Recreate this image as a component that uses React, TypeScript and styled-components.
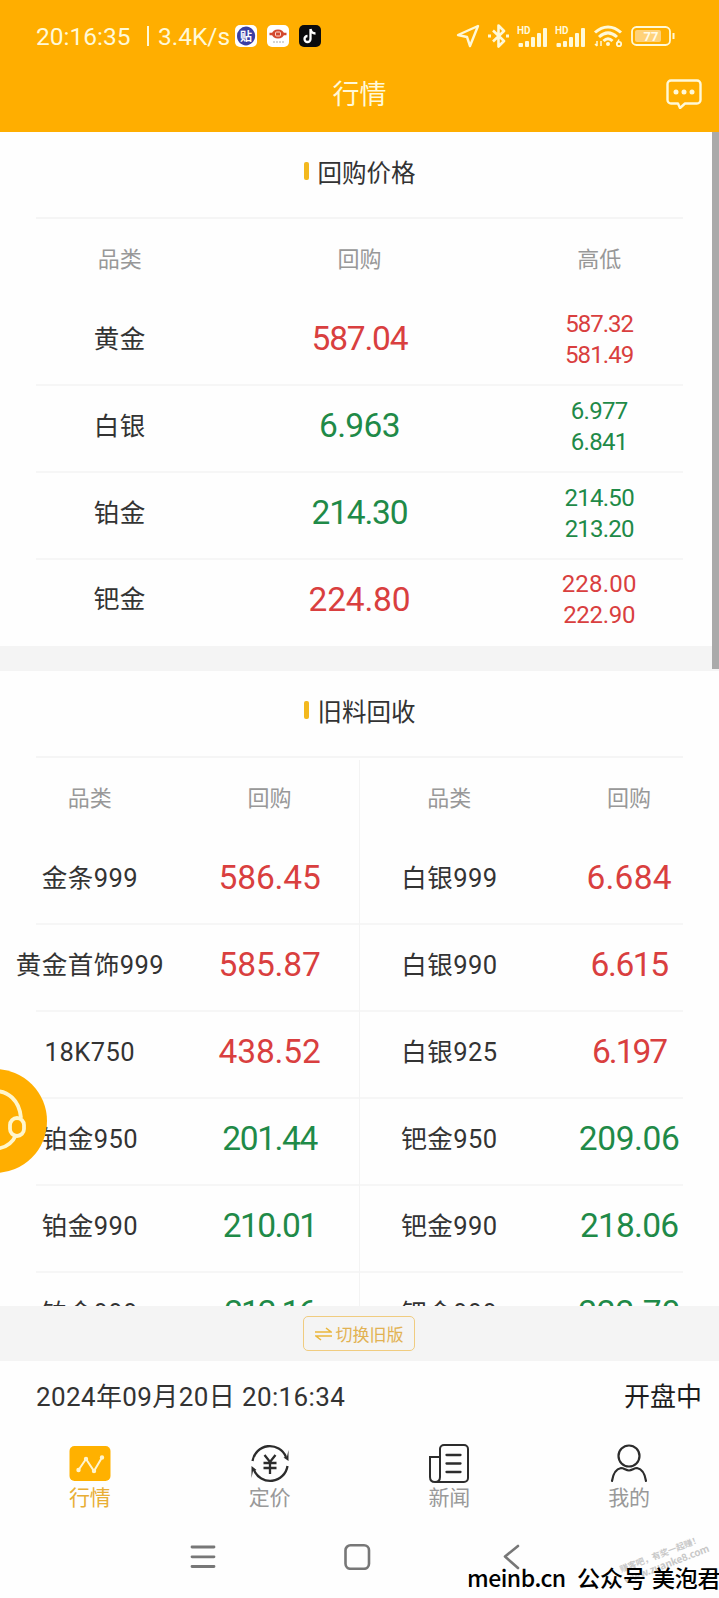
import React from 'react';
import styled, { createGlobalStyle } from 'styled-components';

const Global = createGlobalStyle`
  * { box-sizing: border-box; }
  body { margin: 0; background: #fefefe; font-family: Roboto, "Noto Sans CJK SC", sans-serif; color: #333; }
`;

const RED = '#d93f3f';
const GREEN = '#1f8a48';
const AMBER = '#ffae00';

const Page = styled.div`
  position: relative;
  width: 719px;
  height: 1598px;
  overflow: hidden;
  display: flex;
  flex-direction: column;
`;

const Header = styled.header`
  height: 132px;
  flex: none;
  background: ${AMBER};
  color: #fff9d8;
`;

const StatusBar = styled.div`
  display: flex;
  align-items: center;
  justify-content: space-between;
  height: 72px;
  padding: 0 44px 0 36px;
`;

const StatusGroup = styled.div<{ $gap: number }>`
  display: flex;
  align-items: center;
  gap: ${(p) => p.$gap}px;
`;

const StatusText = styled.span<{ $w: number; $ls?: number }>`
  width: ${(p) => p.$w}px;
  padding-top: 1px;
  font-size: 24.5px;
  line-height: 36px;
  white-space: nowrap;
  letter-spacing: ${(p) => p.$ls ?? 0}px;
`;

const Divider = styled.span`
  width: 2px;
  height: 20px;
  margin-right: 9px;
  background: #fff9d8;
`;

const AppBadges = styled.div`
  display: flex;
  gap: 10px;
  margin-left: 4px;
`;

const TitleBar = styled.div`
  display: grid;
  grid-template-columns: 1fr auto 1fr;
  align-items: center;
  height: 44px;
  padding-right: 17px;
`;

const Title = styled.h1`
  grid-column: 2;
  margin: 0;
  padding: 1px 0 0 17px;
  font-size: 27px;
  line-height: 40px;
  font-weight: 400;
`;

const TitleAction = styled.div`
  justify-self: end;
  height: 30px;
`;

const Scroller = styled.main`
  flex: none;
  height: 1174px;
  overflow: hidden;
`;

const Section = styled.section<{ $gap?: boolean }>`
  ${(p) => (p.$gap ? 'border-bottom: 25px solid #f4f4f4;' : '')}
`;

const SectionTitle = styled.h2`
  display: flex;
  align-items: center;
  justify-content: center;
  gap: 9px;
  height: 87px;
  margin: 0 36px;
  padding-bottom: 7px;
  border-bottom: 2px solid #f5f5f5;
  font-size: 24.5px;
  font-weight: 400;
  &::before {
    content: '';
    width: 5px;
    height: 18px;
    border-radius: 2px;
    background: #f3b81e;
  }
`;

const Row = styled.div<{ $cols: number; $last?: boolean; $h?: number }>`
  position: relative;
  display: grid;
  grid-template-columns: repeat(${(p) => p.$cols}, 1fr);
  height: ${(p) => p.$h ?? 87}px;
  align-items: center;
  justify-items: center;
  white-space: nowrap;
  &::after {
    content: '';
    position: absolute;
    left: 36px;
    right: 36px;
    bottom: 0;
    height: ${(p) => (p.$last ? 0 : 2)}px;
    background: #f6f6f6;
  }
`;

const HeadCell = styled.div`
  padding-top: 2px;
  font-size: 22px;
  line-height: 32px;
  color: #989898;
`;

const Name = styled.div`
  padding-bottom: 8px;
  font-size: 25.5px;
  line-height: 38px;
  letter-spacing: 0.5px;
`;

const Price = styled.div<{ $color: string; $ls: number }>`
  padding-bottom: 7px;
  font-size: 33.5px;
  line-height: 44px;
  letter-spacing: ${(p) => p.$ls}px;
  color: ${(p) => p.$color};
`;

const Range = styled.div<{ $color: string }>`
  padding-bottom: 6px;
  font-size: 24px;
  line-height: 31px;
  text-align: center;
  color: ${(p) => p.$color};
`;

const RangeValue = styled.div<{ $ls: number }>`
  letter-spacing: ${(p) => p.$ls}px;
`;

const SplitBody = styled.div`
  position: relative;
`;

const Splits = styled.div`
  position: absolute;
  left: 359px;
  top: 2px;
  width: 1px;
  height: 100%;
  background: #f3f3f3;
`;

const SwitchStrip = styled.div`
  flex: none;
  display: flex;
  justify-content: center;
  align-items: flex-start;
  height: 55px;
  padding: 10px 1px 0 0;
  background: #f4f4f4;
`;

const SwitchButton = styled.button`
  display: flex;
  align-items: center;
  justify-content: center;
  gap: 4px;
  width: 112px;
  height: 35px;
  padding: 0;
  border: 1.5px solid #f0cc80;
  border-radius: 5px;
  background: transparent;
  color: #e2b253;
  font: 17px/24px "Noto Sans CJK SC", sans-serif;
`;

const TimeBar = styled.div`
  flex: none;
  display: flex;
  justify-content: space-between;
  align-items: center;
  height: 72px;
  padding: 0 17px 0 36px;
  font-size: 26px;
  line-height: 38px;
`;

const Clock = styled.span`
  letter-spacing: 0.38px;
`;

const State = styled.span`
  color: #1c1c1c;
`;

const Tabs = styled.nav`
  flex: none;
  display: grid;
  grid-template-columns: repeat(4, 1fr);
  height: 91px;
`;

const Tab = styled.a<{ $active?: boolean }>`
  display: flex;
  flex-direction: column;
  align-items: center;
  padding-top: 11px;
  font-size: 21px;
  line-height: 31px;
  color: ${(p) => (p.$active ? '#e8ae35' : '#999')};
  svg { flex: none; display: block; }
`;

const SystemNav = styled.div`
  flex: 1;
  display: flex;
  padding: 20px 0 0 188px;
  gap: 125px;
`;

const ScrollThumb = styled.div`
  position: absolute;
  top: 132px;
  right: 0;
  width: 7px;
  height: 537px;
  background: #aaa;
`;

const Support = styled.div`
  position: absolute;
  left: -57px;
  top: 1069px;
  width: 104px;
  height: 104px;
  border-radius: 50%;
  background: ${AMBER};
`;

const Credit = styled.div`
  position: absolute;
  left: 467px;
  top: 1560px;
  display: flex;
  white-space: nowrap;
  font: 500 23px/34px "Noto Sans CJK SC", sans-serif;
  color: #000;
`;

const CreditPart = styled.span<{ $w: number; $ls?: number }>`
  width: ${(p) => p.$w}px;
  letter-spacing: ${(p) => p.$ls ?? 0}px;
`;

const Stamp = styled.div`
  position: absolute;
  left: 619px;
  top: 1547px;
  width: 86px;
  transform: rotate(-21deg);
  font: 700 8.6px/12px "Noto Sans CJK SC", sans-serif;
  color: #c8c8c8;
  white-space: nowrap;
`;

const StampSite = styled.div`
  font-size: 10px;
  letter-spacing: -0.2px;
`;

/* A price and the tracking it is set with. */
type Figure = [string, number];

const metals: { name: string; price: Figure; high: Figure; low: Figure; up: boolean }[] = [
  { name: '黄金', price: ['587.04', -1.2], high: ['587.32', -1], low: ['581.49', -0.9], up: true },
  { name: '白银', price: ['6.963', -0.6], high: ['6.977', -0.7], low: ['6.841', -0.7], up: false },
  { name: '铂金', price: ['214.30', -1.2], high: ['214.50', -0.7], low: ['213.20', -0.8], up: false },
  { name: '钯金', price: ['224.80', -0.2], high: ['228.00', 0.2], low: ['222.90', -0.3], up: true },
];

const scrap: [string, Figure, string, Figure, boolean][] = [
  ['金条999', ['586.45', -0.1], '白银999', ['6.684', 0.2], true],
  ['黄金首饰999', ['585.87', -0.1], '白银990', ['6.615', -1.4], true],
  ['18K750', ['438.52', -0.1], '白银925', ['6.197', -2], true],
  ['铂金950', ['201.44', -1.4], '钯金950', ['209.06', -0.4], false],
  ['铂金990', ['210.01', -1.5], '钯金990', ['218.06', -0.8], false],
  ['铂金999', ['212.16', -2], '钯金999', ['222.70', -0.2], false],
];

const Signal = () => (
  <svg width="31" height="23" viewBox="0 0 31 23" fill="#fff9d8">
    <text x="0" y="9" fontSize="10" fontWeight="700" fontFamily="Roboto">HD</text>
    <rect x="1.500" y="18" width="4.500" height="4" rx="1" />
    <rect x="8" y="16" width="4" height="6" rx="1" />
    <rect x="14" y="12" width="4" height="10" rx="1" />
    <rect x="20" y="8" width="4" height="14" rx="1" />
    <rect x="26" y="3" width="4" height="19" rx="1" />
  </svg>
);

export default function App() {
  return (
    <Page>
      <Global />
      <Header>
        <StatusBar>
          <StatusGroup $gap={0}>
            <StatusText $w={111} $ls={0}>20:16:35</StatusText>
            <Divider />
            <StatusText $w={73} $ls={0}>3.4K/s</StatusText>
            <AppBadges>
              <svg width="22" height="22" viewBox="0 0 22 22">
                <rect width="22" height="22" rx="5" fill="#fff" />
                <path d="M11 1.500a9.500 9.500 0 0 1 9 11c-.7 4-4 7.500-9 8-5-.5-9-4-9-9.500a9.500 9.500 0 0 1 9-9.500z" fill="#3b3fa4" />
                <text x="11" y="15.500" textAnchor="middle" fontSize="12" fontWeight="700" fontFamily="Noto Sans CJK SC" fill="#fff">贴</text>
              </svg>
              <svg width="22" height="22" viewBox="0 0 22 22">
                <rect width="22" height="22" rx="5" fill="#fff" />
                <ellipse cx="11" cy="9" rx="6" ry="4.500" fill="#d3492f" />
                <path d="M2.500 9h17" stroke="#d3492f" strokeWidth="2.500" />
                <rect x="8.500" y="7" width="5" height="4" rx="1" fill="none" stroke="#fbd9d0" />
                <path d="M6 17h11" stroke="#aaa" strokeDasharray="2 1" />
              </svg>
              <svg width="22" height="22" viewBox="0 0 22 22">
                <rect width="22" height="22" rx="5" fill="#0b0b0d" />
                <path d="M11.500 4v10a3 3 0 1 1-3-3M11.500 4c.5 3 2 4.500 5 4.500" fill="none" stroke="#fff" strokeWidth="2.300" />
              </svg>
            </AppBadges>
          </StatusGroup>
          <StatusGroup $gap={7}>
            <svg width="24" height="24" viewBox="0 0 24 24" fill="none" stroke="#fff9d8" strokeWidth="2.400" strokeLinejoin="round">
              <path d="M22 2 2 11l9 2 3 9z" />
            </svg>
            <svg width="23" height="24" viewBox="0 0 23 24" fill="none" stroke="#fff9d8" strokeWidth="2.600" strokeLinejoin="round">
              <path d="M6 6.500 17 17l-5.500 5.500v-21L17 7 6 17.500" />
              <path d="M1 12h3M19 12h3" strokeWidth="3" />
            </svg>
            <Signal />
            <Signal />
            <svg width="31" height="24" viewBox="0 0 31 24" fill="none" stroke="#fff9d8" strokeWidth="3">
              <path d="M2 8.500c8-7.500 18-7.500 26 0M6 13c6-5.500 12-5.500 18 0M10.500 17c3-3 6-3 9 0" />
              <circle cx="15" cy="20" r="2" fill="#fff9d8" stroke="none" />
              <path d="M4 17v5M2 20l2 2M8 22v-5" strokeWidth="1.500" />
              <circle cx="26" cy="20" r="2.200" strokeWidth="1.800" />
              <path d="M24 19.500l2-4" strokeWidth="1.600" />
            </svg>
            <svg width="44" height="20" viewBox="0 0 44 20">
              <rect x="4" y="4" width="26" height="12" rx="2" fill="#ffd27a" />
              <rect x="1" y="1" width="38" height="18" rx="4.500" fill="none" stroke="#fff9d8" strokeWidth="1.800" />
              <path d="M42.500 7v6" stroke="#fff9d8" strokeWidth="2" />
              <text x="20" y="14.500" textAnchor="middle" fontSize="13" fontWeight="700" fontFamily="Roboto" fill="#fffbe8">77</text>
            </svg>
          </StatusGroup>
        </StatusBar>
        <TitleBar>
          <Title>行情</Title>
          <TitleAction>
            <svg width="36" height="30" viewBox="0 0 36 30" fill="none" stroke="#fff9d8" strokeWidth="2.400" strokeLinejoin="round">
              <path d="M5 1.500h26a3.500 3.500 0 0 1 3.500 3.500v16a3.500 3.500 0 0 1-3.500 3.500H19l-5 4.500-2-4.500H5A3.500 3.500 0 0 1 1.500 21V5A3.500 3.500 0 0 1 5 1.500z" />
              <g fill="#fff9d8" stroke="none">
                <circle cx="10" cy="13" r="2.500" />
                <circle cx="18" cy="13" r="2.500" />
                <circle cx="26" cy="13" r="2.500" />
              </g>
            </svg>
          </TitleAction>
        </TitleBar>
      </Header>

      <Scroller>
        <Section $gap>
          <SectionTitle>回购价格</SectionTitle>
          <Row $cols={3} $last $h={80}>
            <HeadCell>品类</HeadCell>
            <HeadCell>回购</HeadCell>
            <HeadCell>高低</HeadCell>
          </Row>
          {metals.map((m, i) => {
            const color = m.up ? RED : GREEN;
            const last = i === metals.length - 1;
            return (
              <Row key={m.name} $cols={3} $last={last} $h={last ? 86 : 87}>
                <Name>{m.name}</Name>
                <Price $color={color} $ls={m.price[1]}>{m.price[0]}</Price>
                <Range $color={color}>
                  <RangeValue $ls={m.high[1]}>{m.high[0]}</RangeValue>
                  <RangeValue $ls={m.low[1]}>{m.low[0]}</RangeValue>
                </Range>
              </Row>
            );
          })}
        </Section>
        <Section>
          <SectionTitle>旧料回收</SectionTitle>
          <SplitBody>
            <Row $cols={4} $last $h={80}>
              <HeadCell>品类</HeadCell>
              <HeadCell>回购</HeadCell>
              <HeadCell>品类</HeadCell>
              <HeadCell>回购</HeadCell>
            </Row>
            {scrap.map(([a, pa, b, pb, up]) => (
              <Row key={a} $cols={4}>
                <Name>{a}</Name>
                <Price $color={up ? RED : GREEN} $ls={pa[1]}>{pa[0]}</Price>
                <Name>{b}</Name>
                <Price $color={up ? RED : GREEN} $ls={pb[1]}>{pb[0]}</Price>
              </Row>
            ))}
            <Splits />
          </SplitBody>
        </Section>
      </Scroller>

      <SwitchStrip>
        <SwitchButton>
          <svg width="17" height="14" viewBox="0 0 17 14" fill="none" stroke="#eab73c" strokeWidth="1.500">
            <path d="M0 5h16l-5-4M17 9H1l5 4" />
          </svg>
          切换旧版
        </SwitchButton>
      </SwitchStrip>

      <TimeBar>
        <Clock>2024年09月20日 20:16:34</Clock>
        <State>开盘中</State>
      </TimeBar>

      <Tabs>
        <Tab $active>
          <svg width="42" height="39" viewBox="0 0 42 39">
            <rect x="0.500" y="2" width="41" height="35" rx="5" fill="#ffb100" />
            <g stroke="#fff5cf" fill="#fff5cf" strokeWidth="2">
              <path d="M9.500 26 17 15l8 12 8-13.500" fill="none" />
              <circle cx="9.500" cy="26" r="1.200" />
              <circle cx="17" cy="15" r="1.200" />
              <circle cx="25" cy="27" r="1.200" />
              <circle cx="33" cy="13.500" r="1.200" />
            </g>
          </svg>
          行情
        </Tab>
        <Tab>
          <svg width="40" height="39" viewBox="0 0 40 39" fill="none" stroke="#2c2c2c" strokeWidth="2.300">
            <path d="M2.500 17A17.500 17.500 0 0 1 36 13M37.500 22A17.500 17.500 0 0 1 4 26" />
            <path d="M38.500 6v11l-5-3.500 3.500-1zM1.500 34V22l5 4-3.500 1z" fill="#2c2c2c" stroke="none" />
            <path d="m14.500 11 5.500 7 5.500-7M20 18v12M13.500 19h13M13.500 24h13" />
          </svg>
          定价
        </Tab>
        <Tab>
          <svg width="40" height="39" viewBox="0 0 40 39" fill="none" stroke="#2c2c2c" strokeWidth="2">
            <path d="M6 38c3.500 0 5-2 5-5V5a4 4 0 0 1 4-4h20a4 4 0 0 1 4 4v29a4 4 0 0 1-4 4zM6 38c-3 0-5-2-5-5V13h10" />
            <path d="M17.500 11h14M17.500 19.500h14M17.500 28h14" strokeWidth="2.300" strokeLinecap="round" />
          </svg>
          新闻
        </Tab>
        <Tab>
          <svg width="38" height="39" viewBox="0 0 38 39" fill="none" stroke="#2c2c2c" strokeWidth="2.200" strokeLinecap="round">
            <circle cx="19" cy="12" r="10.500" />
            <path d="M2 37c1-7 4-12 9-13 3 0 5 2.500 8 2.500s5-2.500 8-2.500c5 1 8 6 9 13" />
          </svg>
          我的
        </Tab>
      </Tabs>

      <SystemNav>
        <svg width="29" height="26" viewBox="0 0 29 26" stroke="#777" strokeWidth="2.800" strokeLinecap="round">
          <path d="M4 3h22M4 12.800h22M4 22.500h22" />
        </svg>
        <svg width="32" height="26" viewBox="0 0 32 26" fill="none" stroke="#777" strokeWidth="2.600">
          <rect x="3.500" y="1.300" width="23.500" height="23.500" rx="5" />
        </svg>
        <svg width="26" height="26" viewBox="0 0 26 26" fill="none" stroke="#777" strokeWidth="2.600" strokeLinecap="round" strokeLinejoin="round">
          <path d="M19 2 6 12.500 19 24" />
        </svg>
      </SystemNav>

      <ScrollThumb />
      <Support>
        <svg width="104" height="104" viewBox="0 0 104 104" fill="none" stroke="#fff6cc" strokeWidth="3.800">
          <path d="M25 50C29 14 75 12 78 49M73 66c-4 9-12 14-24 14" />
          <rect x="67" y="49" width="14" height="18" rx="7" />
        </svg>
      </Support>
      <Stamp>
        赚客吧，有奖一起赚！
        <StampSite>www.zuanke8.com</StampSite>
      </Stamp>
      <Credit>
        <CreditPart $w={110} $ls={-0.5}>meinb.cn</CreditPart>
        <CreditPart $w={75}>公众号</CreditPart>
        <CreditPart $w={70} $ls={-0.2}>美泡君</CreditPart>
      </Credit>
    </Page>
  );
}
